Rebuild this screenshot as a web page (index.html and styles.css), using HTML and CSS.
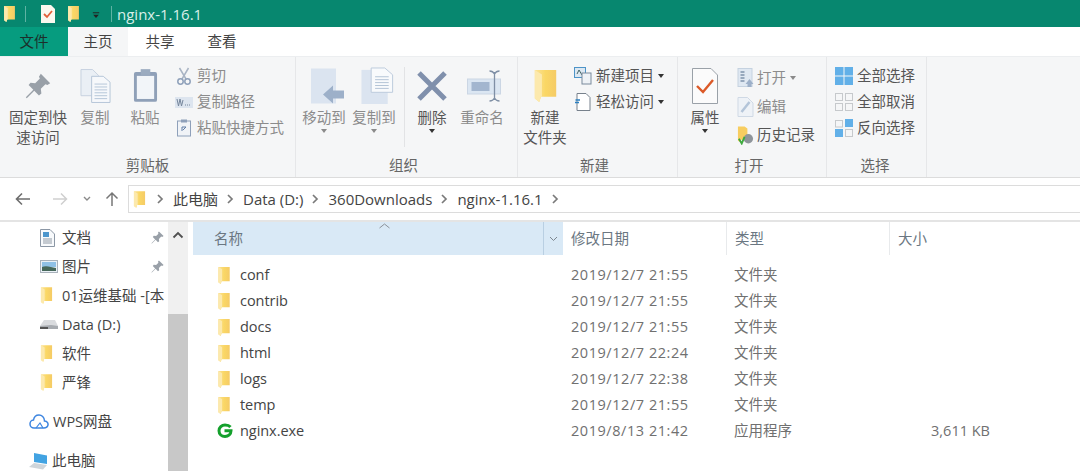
FILE: index.html
```html
<!DOCTYPE html>
<html lang="zh-CN">
<head>
<meta charset="utf-8">
<title>nginx-1.16.1</title>
<link rel="stylesheet" href="styles.css">
</head>
<body>
<svg class="defs" aria-hidden="true">
  <defs>
    <linearGradient id="fg" x1="0" x2="1" y1="0" y2="0"><stop offset="0" stop-color="#fbe39a"/><stop offset=".5" stop-color="#fad765"/><stop offset="1" stop-color="#f5cb66"/></linearGradient>
    <symbol id="folder" viewBox="0 0 14 20"><path d="M1 1H13V16H4.500L3.500 19L1 17Z" fill="url(#fg)"/><path d="M1 1L5 3.500V16H4.500L3.500 19L1 17Z" fill="#fce9ad"/></symbol>
    <symbol id="pin" viewBox="0 0 16 16"><path d="M9.500 1.500L14.500 6.500L13 7.500L12 7L9.500 9.500L9.800 12L8.500 13L6 10.500L2 14.500L1.500 14L5.500 10L3 7.500L4 6.200L6.500 6.500L9 4L8.500 3Z" fill="#99a0a8"/></symbol>
    <symbol id="chev" viewBox="0 0 8 10"><path d="M2 1L6 5L2 9" fill="none" stroke="#7a7a7a" stroke-width="1.700"/></symbol>
  </defs>
</svg>
<div class="window">
  <header class="titlebar">
    <svg class="ti ti-folder"><use href="#folder"/></svg>
    <span class="tsep"></span>
    <svg class="ti ti-check" viewBox="0 0 14 18"><path d="M0 0H10L14 4V18H0Z" fill="#fbf8ef"/><path d="M3 9L6 12L11 6" fill="none" stroke="#e2603a" stroke-width="1.800"/></svg>
    <svg class="ti ti-folder2"><use href="#folder"/></svg>
    <svg class="ti ti-caret" viewBox="0 0 10 8"><rect x="1" y="0" width="8" height="1.200" fill="#222"/><path d="M1.500 3H8.500L5 7Z" fill="#222"/></svg>
    <span class="tsep tsep2"></span>
    <span class="ttext">nginx-1.16.1</span>
  </header>
  <nav class="tabs">
    <span class="tab tab-file">文件</span>
    <span class="tab tab-home">主页</span>
    <span class="tab tab-share">共享</span>
    <span class="tab tab-view">查看</span>
  </nav>
  <section class="ribbon">
    <div class="group g1">
      <div class="gbody">
        <div class="big w76"><span class="bi"><svg class="i-pin" viewBox="0 0 16 16"><use href="#pin"/></svg></span><span class="lb dark">固定到快<br>速访问</span></div>
        <div class="big w38"><span class="bi"><svg class="i-copy" viewBox="0 0 32 36"><path d="M1 1H13L19 7V28H1Z" fill="#eaeff5" stroke="#c6d1df"/><path d="M12 8H24L31 14V35H12Z" fill="#f6f8fb" stroke="#b5c5d8"/><path d="M15 16H28M15 19H28M15 22H28M15 25H28M15 28H28M15 31H28" stroke="#b5c5d8"/></svg></span><span class="lb">复制</span></div>
        <div class="big w38 ml12"><span class="bi"><svg class="i-paste" viewBox="0 0 26 36"><rect x="1" y="4" width="24" height="31" rx="2" fill="#8fa0b8"/><rect x="4" y="8" width="18" height="24" fill="#f2f5f9"/><rect x="8" y="1" width="10" height="6" fill="#9babc0"/></svg></span><span class="lb">粘贴</span></div>
        <div class="col ml11">
          <div class="sm"><svg class="si" viewBox="0 0 14 18"><path d="M2.500 1L9 12M11.500 1L5 12" stroke="#a9b4c4" stroke-width="1.500" fill="none"/><circle cx="3.500" cy="14.500" r="2.700" fill="none" stroke="#8ea0ba" stroke-width="1.500"/><circle cx="10.500" cy="14.500" r="2.700" fill="none" stroke="#8ea0ba" stroke-width="1.500"/></svg><span class="smt">剪切</span></div>
          <div class="sm"><svg class="si-w" viewBox="0 0 18 11"><rect width="18" height="11" fill="#dde5ef"/><path d="M2 2L3.500 9L5 2L6.500 9L8 3M10 8H11M12 8H13M14 8H15" stroke="#75869c" fill="none"/></svg><span class="smt">复制路径</span></div>
          <div class="sm"><svg class="si" viewBox="0 0 14 18"><rect x=".500" y="2" width="13" height="15" fill="#f0f3f7" stroke="#8ea0ba"/><rect x="4" y=".500" width="6" height="3" fill="#8ea0ba"/><path d="M5 12V8H9M9 8L6 11" stroke="#5f7da6" fill="none"/></svg><span class="smt">粘贴快捷方式</span></div>
        </div>
      </div>
      <div class="glabel">剪贴板</div>
    </div>
    <div class="group g2">
      <div class="gbody">
        <div class="big w50"><span class="bi"><svg class="i-move shift" viewBox="0 0 34 36"><rect x="0" y="1" width="25" height="35" fill="#dbe4f0"/><path d="M12 27L22 18V23H33V31H22V36Z" fill="#9db0c9"/></svg></span><span class="lb">移动到</span><i class="caret"></i></div>
        <div class="big w50"><span class="bi"><svg class="i-move shift" viewBox="0 0 34 38"><rect x="0" y="3" width="27" height="35" fill="#dbe4f0"/><path d="M10 1H24L32 8V26H10Z" fill="#f8fafc" stroke="#bccbdc"/><path d="M14 10H28M14 13H28M14 16H28M14 19H28M14 22H28" stroke="#b3c3d6"/></svg></span><span class="lb">复制到</span><i class="caret"></i></div>
        <span class="vdiv"></span>
        <div class="big w50"><span class="bi"><svg class="i-del" viewBox="0 0 32 32"><path d="M3 3L29 29M29 3L3 29" stroke="#8090ac" stroke-width="5"/></svg></span><span class="lb dark">删除</span><i class="caret dk"></i></div>
        <div class="big w50"><span class="bi"><svg class="i-ren" viewBox="0 0 34 32"><rect x="0" y="9" width="33" height="15" fill="#dbe6f2" stroke="#cbd6e4"/><rect x="4" y="12" width="18" height="9" fill="#a3b6cf"/><path d="M27 2V30M22 1C25 1 26 2 27 4C28 2 29 1 32 1M22 31C25 31 26 30 27 28C28 30 29 31 32 31" stroke="#7f8fa5" stroke-width="1.300" fill="none"/></svg></span><span class="lb">重命名</span></div>
      </div>
      <div class="glabel lab6">组织</div>
    </div>
    <div class="group g3">
      <div class="gbody">
        <div class="big w54"><span class="bi"><svg class="i-newf"><use href="#folder"/></svg></span><span class="lb dark">新建<br>文件夹</span></div>
        <div class="col ml2">
          <div class="sm dark"><svg class="si-n" viewBox="0 0 18 18"><rect x=".500" y=".500" width="11" height="10" fill="#dce8f2" stroke="#4d94c8"/><path d="M3 7L5 3L8 8" stroke="#466" fill="none"/><rect x="8" y="6" width="9" height="11" fill="#eef2f6" stroke="#7a8a9c"/></svg><span class="smt">新建项目</span><i class="caret inl dk"></i></div>
          <div class="sm dark"><svg class="si-n" viewBox="0 0 18 18"><path d="M3 .500H12L16 4.500V17.500H3Z" fill="#fff" stroke="#77818c"/><path d="M1.500 7H6M1 9.500H5" stroke="#2b7fc0" stroke-width="1.400"/></svg><span class="smt">轻松访问</span><i class="caret inl dk"></i></div>
        </div>
      </div>
      <div class="glabel lab6">新建</div>
    </div>
    <div class="group g4">
      <div class="gbody">
        <div class="big w54"><span class="bi"><svg class="i-prop" viewBox="0 0 26 36"><path d="M.500 .500H19L25.500 7V35.500H.500Z" fill="#fbfbfb" stroke="#9aa1a8"/><path d="M5 18L11 24L21 12" fill="none" stroke="#dc5a28" stroke-width="2.400"/></svg></span><span class="lb dark">属性</span><i class="caret dk"></i></div>
        <div class="col col-open">
          <div class="sm sm28"><svg class="si-o" viewBox="0 0 16 20"><rect x=".500" y=".500" width="14" height="18" fill="#dfe8f2" stroke="#c5d2e0"/><path d="M3 4H7M3 7H7M3 10H7M3 13H7" stroke="#7f93ac" stroke-width="1.500"/><path d="M8 16L12 11L16 16H14V19H10V16Z" fill="#9db0c9"/></svg><span class="smt">打开</span><i class="caret inl"></i></div>
          <div class="sm sm28"><svg class="si-o" viewBox="0 0 16 20"><path d="M.500 .500H10L15.500 6V19.500H.500Z" fill="#eef2f7" stroke="#cfd9e5"/><path d="M4 15L12 5" stroke="#b4c5d9" stroke-width="2.500"/></svg><span class="smt">编辑</span></div>
          <div class="sm sm28 dark"><svg class="si-o" viewBox="0 0 18 20"><path d="M1 1H8L11 3V15H4V18L1 16Z" fill="#f7cd60"/><circle cx="12" cy="14" r="5" fill="#8f959b"/><path d="M2 14L5 19L8 12" stroke="#3eaa3e" stroke-width="2" fill="none"/></svg><span class="smt">历史记录</span></div>
        </div>
      </div>
      <div class="glabel lab6">打开</div>
    </div>
    <div class="group g5">
      <div class="gbody">
        <div class="col">
          <div class="sm dark"><svg class="si-s" viewBox="0 0 18 18"><rect width="8.500" height="8.500" fill="#62b0e8"/><rect x="9.500" width="8.500" height="8.500" fill="#62b0e8"/><rect y="9.500" width="8.500" height="8.500" fill="#62b0e8"/><rect x="9.500" y="9.500" width="8.500" height="8.500" fill="#62b0e8"/></svg><span class="smt">全部选择</span></div>
          <div class="sm dark"><svg class="si-s" viewBox="0 0 18 18"><g fill="none" stroke="#c6c9cc"><rect x=".500" y=".500" width="7" height="7"/><rect x="10.500" y=".500" width="7" height="7"/><rect x=".500" y="10.500" width="7" height="7"/><rect x="10.500" y="10.500" width="7" height="7"/></g></svg><span class="smt">全部取消</span></div>
          <div class="sm dark"><svg class="si-s" viewBox="0 0 18 18"><rect x="10" width="8" height="8" fill="#62b0e8"/><rect y="10" width="8" height="8" fill="#62b0e8"/><rect x=".500" y="1.500" width="7" height="6.500" fill="none" stroke="#c6c9cc"/><rect x="10.500" y="10.500" width="7" height="7" fill="none" stroke="#c6c9cc"/></svg><span class="smt">反向选择</span></div>
        </div>
      </div>
      <div class="glabel lab3">选择</div>
    </div>
  </section>
  <div class="addrrow">
    <svg class="nav nav-back" viewBox="0 0 16 14"><path d="M15 7H2M7 1.500L1.500 7L7 12.500" fill="none" stroke="#6e6e6e" stroke-width="1.600"/></svg>
    <svg class="nav nav-fwd" viewBox="0 0 16 14"><path d="M1 7H14M9 1.500L14.500 7L9 12.500" fill="none" stroke="#cfcfcf" stroke-width="1.500"/></svg>
    <svg class="nav nav-down" viewBox="0 0 8 6"><path d="M1 1L4 4L7 1" fill="none" stroke="#8a8a8a" stroke-width="1.400"/></svg>
    <svg class="nav nav-up" viewBox="0 0 14 16"><path d="M7 15V2M1.500 7.500L7 2L12.500 7.500" fill="none" stroke="#777" stroke-width="1.500"/></svg>
    <div class="addr">
      <svg class="crumb-folder"><use href="#folder"/></svg>
      <svg class="chev"><use href="#chev"/></svg><span class="cr">此电脑</span>
      <svg class="chev"><use href="#chev"/></svg><span class="cr">Data (D:)</span>
      <svg class="chev"><use href="#chev"/></svg><span class="cr">360Downloads</span>
      <svg class="chev"><use href="#chev"/></svg><span class="cr">nginx-1.16.1</span>
      <svg class="chev"><use href="#chev"/></svg>
    </div>
  </div>
  <div class="content">
    <aside class="side">
      <div class="sitem"><svg class="sic" viewBox="0 0 15 18"><path d="M.500 .500H10L14.500 5V17.500H.500Z" fill="#f8fafc" stroke="#8b97a5"/><rect x="3" y="3" width="6" height="5" fill="#4d96cc"/><path d="M3 10H12M3 12H12M3 14H12" stroke="#909aa5"/></svg><span class="stext">文档</span><svg class="spin" viewBox="0 0 16 16"><use href="#pin"/></svg></div>
      <div class="sitem"><svg class="sic sic-w" viewBox="0 0 18 13"><rect x=".500" y=".500" width="17" height="12" fill="#eaf1f7" stroke="#a9b2bb"/><rect x="2" y="2" width="14" height="5" fill="#8fc1e6"/><path d="M2 7C6 5 11 7 16 8V11H2Z" fill="#46685a"/></svg><span class="stext">图片</span><svg class="spin" viewBox="0 0 16 16"><use href="#pin"/></svg></div>
      <div class="sitem"><svg class="sicf"><use href="#folder"/></svg><span class="stext">01运维基础 -[本</span></div>
      <div class="sitem"><svg class="sic sic-d" viewBox="0 0 20 11"><path d="M5 1H16L19 7V10H1V7Z" fill="#d9dbde"/><path d="M1 7L12 6L19 7V10H1Z" fill="#a7abb0"/><path d="M1 8H9V10H1Z" fill="#555"/></svg><span class="stext">Data (D:)</span></div>
      <div class="sitem"><svg class="sicf"><use href="#folder"/></svg><span class="stext">软件</span></div>
      <div class="sitem"><svg class="sicf"><use href="#folder"/></svg><span class="stext">严锋</span></div>
      <div class="sitem top sec"><svg class="sic sic-cloud" viewBox="0 0 20 15"><path d="M5 14H15C19 14 20 10 18 8C17 7 16 7 15.500 7C15.500 3 12.500 1 10 1C7 1 5 3 4.500 6C2 6 1 8.500 1 10C1 12.500 3 14 5 14Z" fill="#fff" stroke="#3d85e0" stroke-width="1.500"/><path d="M7 14L11 9L14 14" fill="none" stroke="#3d85e0" stroke-width="1.200"/></svg><span class="stext">WPS网盘</span></div>
      <div class="sitem top sec"><svg class="sic sic-pc" viewBox="0 0 20 18"><path d="M5 1L18 3.500V12L5 10Z" fill="#42a3e2"/><path d="M0 15L5 11L18 13L14 17.500Z" fill="#cfd5da"/></svg><span class="stext">此电脑</span></div>
    </aside>
    <div class="scroll"><svg class="sup" viewBox="0 0 12 8"><path d="M1.500 6.500L6 2L10.500 6.500" fill="none" stroke="#505050" stroke-width="1.800"/></svg><div class="thumb"></div></div>
    <main class="files">
      <div class="fhead">
        <div class="hname"><span class="hnm">名称</span><svg class="sortup" viewBox="0 0 11 6"><path d="M.500 5L5.500 1L10.500 5" fill="none" stroke="#8b9198"/></svg><span class="hdrop"><svg viewBox="0 0 9 6" class="hchev"><path d="M1 1L4.500 4.500L8 1" fill="none" stroke="#7d8790"/></svg></span></div>
        <div class="hcol hdate">修改日期</div>
        <div class="hcol htype">类型</div>
        <div class="hcol hsize">大小</div>
      </div>
      <div class="rows">
        <div class="row"><span class="fname"><svg class="ficon"><use href="#folder"/></svg>conf</span><span class="fdate">2019/12/7 21:55</span><span>文件夹</span><span></span></div>
        <div class="row"><span class="fname"><svg class="ficon"><use href="#folder"/></svg>contrib</span><span class="fdate">2019/12/7 21:55</span><span>文件夹</span><span></span></div>
        <div class="row"><span class="fname"><svg class="ficon"><use href="#folder"/></svg>docs</span><span class="fdate">2019/12/7 21:55</span><span>文件夹</span><span></span></div>
        <div class="row"><span class="fname"><svg class="ficon"><use href="#folder"/></svg>html</span><span class="fdate">2019/12/7 22:24</span><span>文件夹</span><span></span></div>
        <div class="row"><span class="fname"><svg class="ficon"><use href="#folder"/></svg>logs</span><span class="fdate">2019/12/7 22:38</span><span>文件夹</span><span></span></div>
        <div class="row"><span class="fname"><svg class="ficon"><use href="#folder"/></svg>temp</span><span class="fdate">2019/12/7 21:55</span><span>文件夹</span><span></span></div>
        <div class="row"><span class="fname"><svg class="ficon-g" viewBox="0 0 16 15.500"><path d="M13.500 4C12.300 2.600 10.300 2 8 2C4.700 2 2 4.500 2 7.700C2 11 4.700 13.400 8 13.400C11.300 13.400 14 11 14 7.800H7.500" fill="none" stroke="#14a02c" stroke-width="3"/></svg>nginx.exe</span><span class="fdate">2019/8/13 21:42</span><span>应用程序</span><span class="fsize">3,611 KB</span></div>
      </div>
    </main>
  </div>
</div>
</body>
</html>
```
FILE: styles.css
```css
* { box-sizing: border-box; }
html, body { margin: 0; padding: 0; height: 100%; background: #fff; overflow: hidden; }
body { font: 14.500px/20px "Open Sans", "Noto Sans CJK SC", sans-serif; color: #555; }
.defs { display: block; width: 0; height: 0; }
.window { width: 1080px; height: 471px; display: flex; flex-direction: column; overflow: hidden; }

.titlebar { height: 27px; background: #07876f; display: flex; align-items: center; padding-left: 3px; flex: none; }
.ti { display: block; flex: none; }
.ti-folder { width: 13px; height: 18px; }
.tsep { width: 1px; height: 16px; background: #5fb3a3; margin-left: 9px; }
.ti-check { width: 14px; height: 18px; margin-left: 15px; }
.ti-folder2 { width: 13px; height: 18px; margin-left: 12px; }
.ti-caret { width: 8px; height: 7px; margin-left: 12px; margin-top: 3px; }
.tsep2 { margin-left: 11px; }
.ttext { color: #d9efe9; font-size: 15px; margin-left: 5px; }

.tabs { height: 29px; display: flex; flex: none; background: #fff; color: #444; }
.tab { display: flex; align-items: center; justify-content: center; }
.tab-file { width: 68px; background: #069c7f; color: #1c2f2b; }
.tab-home { width: 60px; background: #f5f6f7; }
.tab-share { width: 64px; }
.tab-view { width: 60px; }

.ribbon { height: 122px; background: #f5f6f7; display: flex; flex: none; border-top: 1px solid #eceef0; border-bottom: 1px solid #dcdcdc; }
.group { display: flex; flex-direction: column; border-right: 1px solid #e6e7e9; flex: none; }
.g1 { width: 296px; }
.g2 { width: 222px; }
.g3 { width: 160px; }
.g4 { width: 149px; }
.g5 { width: 100px; }
.g2 .gbody { padding-left: 3px; }
.g5 .gbody { padding-left: 8px; }
.gbody { flex: 1; display: flex; }
.glabel { height: 24px; padding-top: 3px; line-height: 20px; text-align: center; color: #666; }
.lab6 { padding-right: 6px; }
.lab3 { padding-right: 3px; }

.big { display: flex; flex-direction: column; align-items: center; flex: none; white-space: nowrap; color: #8c8c8c; }
.w76 { width: 76px; }
.w38 { width: 38px; }
.w50 { width: 50px; }
.w54 { width: 54px; }
.ml12 { margin-left: 12px; }
.ml11 { margin-left: 11px; }
.ml2 { margin-left: 2px; }
.bi { height: 51px; display: flex; align-items: center; justify-content: center; padding-top: 6px; flex: none; }
.shift { margin-left: 8px; }
.lb { text-align: center; line-height: 20px; }
.big .dark { color: #555; }
.caret { display: block; width: 0; height: 0; border: 3px solid transparent; border-top: 4px solid #8a8a8a; border-bottom: 0; margin-top: 1px; }
.caret.dk { border-top-color: #333; }
.caret.inl { margin: 0 0 0 4px; }
.vdiv { width: 1px; height: 80px; background: #e2e3e5; margin: 10px 2px 0 5px; flex: none; }

.col { display: flex; flex-direction: column; padding-top: 6px; flex: none; }
.col-open { margin-left: 5px; padding-top: 7px; }
.sm { height: 26px; display: flex; align-items: center; white-space: nowrap; color: #8c8c8c; }
.sm28 { height: 28.500px; }
.sm.dark { color: #555; }
.si { width: 14px; height: 18px; flex: none; margin: 0 6px 0 2px; }
.si-w { width: 18px; height: 11px; margin: 0 4px 0 0; flex: none; }
.si-n { width: 18px; height: 18px; margin: 0 4px 0 0; flex: none; }
.smt { flex: none; }
.si-o { width: 17px; height: 20px; margin-right: 3px; flex: none; }
.si-s { width: 18px; height: 18px; margin-right: 4px; flex: none; }

.i-pin { width: 30px; height: 30px; }
.i-copy { width: 31px; height: 36px; }
.i-paste { width: 25px; height: 35px; }
.i-move { width: 34px; height: 37px; }
.i-del { width: 32px; height: 32px; }
.i-ren { width: 35px; height: 32px; margin-left: 4px; }
.i-newf { width: 25px; height: 36px; }
.i-prop { width: 26px; height: 36px; }

.addrrow { height: 44px; display: flex; align-items: center; flex: none; border-bottom: 2px solid #e4e4e4; }
.nav { display: block; flex: none; }
.nav-back { width: 16px; height: 14px; margin-left: 15px; }
.nav-fwd { width: 16px; height: 14px; margin-left: 21px; }
.nav-down { width: 8px; height: 6px; margin-left: 15px; }
.nav-up { width: 14px; height: 16px; margin-left: 14px; }
.addr { margin-left: 9px; flex: 1; height: 28px; border: 1px solid #dcdcdc; border-right: 0; display: flex; align-items: center; color: #444; padding-left: 4px; font-size: 15px; }
.crumb-folder { width: 13px; height: 19px; flex: none; margin-right: 2px; }
.chev { width: 8px; height: 10px; flex: none; margin: 0 9px 0 8px; }
.cr { flex: none; }

.content { flex: 1; display: flex; min-height: 0; }
.side { width: 168px; flex: none; overflow: hidden; padding-top: 1px; }
.sitem { height: 29px; display: flex; align-items: center; white-space: nowrap; color: #444; padding-left: 40px; position: relative; }
.sitem.top { padding-left: 29px; }
.sec { margin-top: 10px; }
.sic { width: 15px; height: 18px; flex: none; margin-right: 7px; }
.sic-w { width: 18px; height: 13px; margin: 0 4px 0 0; }
.sic-d { width: 20px; height: 11px; margin: 0 3px 0 -1px; }
.sic-cloud { width: 20px; height: 15px; margin-right: 4px; }
.sic-pc { width: 20px; height: 18px; margin-right: 3px; }
.sicf { width: 13px; height: 19px; flex: none; margin: 0 9px 0 0; }
.stext { flex: none; }
.spin { width: 15px; height: 15px; position: absolute; left: 150px; top: 7px; }

.scroll { width: 20px; flex: none; background: #f0f0f0; display: flex; flex-direction: column; align-items: center; }
.sup { width: 12px; height: 8px; margin-top: 9px; flex: none; }
.thumb { width: 20px; margin-top: 75px; flex: 1; background: #c8c8c8; }

.files { flex: 1; padding-left: 5px; min-width: 0; }
.fhead { height: 33px; display: flex; }
.hname { width: 370px; background: #d9e9f6; display: flex; align-items: center; padding-left: 21px; position: relative; flex: none; color: #6b7782; }
.hnm { flex: 1; }
.sortup { width: 11px; height: 6px; position: absolute; left: 186px; top: 1px; }
.hdrop { width: 20px; height: 100%; border-left: 1px solid #b9cfe2; display: flex; align-items: center; justify-content: center; }
.hchev { width: 9px; height: 6px; }
.hcol { height: 100%; display: flex; align-items: center; padding-left: 8px; color: #6b7782; border-right: 1px solid #e8eaec; flex: none; }
.hdate { width: 164px; }
.htype { width: 163px; }
.hsize { width: 100px; border-right: 0; }

.rows { padding-top: 7px; }
.row { height: 26px; display: grid; grid-template-columns: 370px 163px 164px 100px; align-items: center; color: #707070; }
.row > span { padding-left: 8px; white-space: nowrap; }
.row > .fname { display: flex; align-items: center; padding-left: 24px; color: #444; letter-spacing: -.05px; }
.row > .fdate { letter-spacing: .55px; }
.ficon { width: 14px; height: 19px; margin-right: 9px; flex: none; }
.ficon-g { width: 16px; height: 15.500px; margin-right: 7px; flex: none; }
.row > .fsize { padding-left: 0; text-align: right; }
```
